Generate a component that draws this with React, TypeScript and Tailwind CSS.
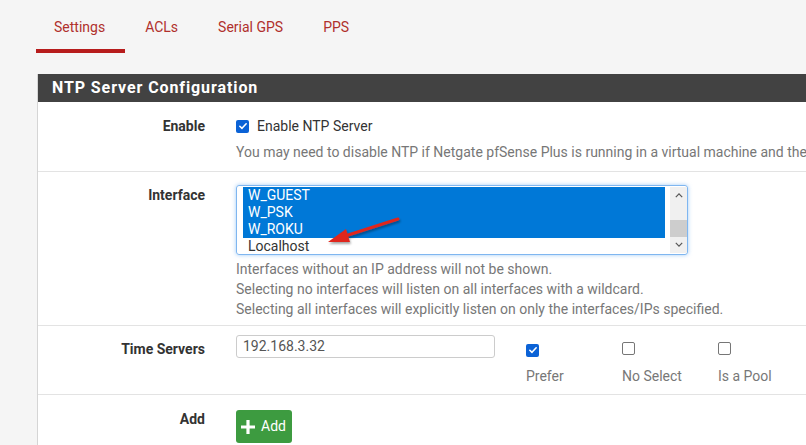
import React from "react";

const Check: React.FC<{ checked?: boolean }> = ({ checked }) =>
    checked ? (
        <span className="inline-flex h-[13px] w-[13px] items-center justify-center rounded-[2px] bg-[#0b62d6]">
            <svg viewBox="0 0 12 12" className="h-[10px] w-[10px]">
                <path d="M2.2 6.3 L4.8 8.8 L9.8 3.4" fill="none" stroke="#fff" strokeWidth="1.9" strokeLinecap="round" strokeLinejoin="round" />
            </svg>
        </span>
    ) : (
        <span className="inline-block h-[13px] w-[13px] rounded-[2px] border-[1.5px] border-[#767676] bg-white" />
    );

const Row: React.FC<{ label: string; cls: string; labelCls?: string; children: React.ReactNode }> = ({ label, cls, labelCls = "", children }) => (
    <div className={`flex border-b border-[#e3e3e3] ${cls}`}>
        <div className={`w-[167px] shrink-0 text-right text-[14px] font-bold text-[#333] ${labelCls}`}>{label}</div>
        <div className="ml-[31px] min-w-0 flex-1">{children}</div>
    </div>
);

const items = [
    { name: "W_GUEST", sel: true },
    { name: "W_PSK", sel: true },
    { name: "W_ROKU", sel: true },
    { name: "Localhost", sel: false },
];

const App: React.FC = () => {
    return (
        <div className="relative h-[445px] w-[806px] overflow-hidden bg-[#f5f5f5] font-['Roboto',sans-serif]">
            {/* tabs */}
            <div className="flex pl-[36px] text-[14px] text-[#b0302c]">
                <div className="border-b-4 border-[#b71c1c] pb-[12px] pl-[18px] pr-[20px] pt-[17px] leading-[20px]">Settings</div>
                <div className="px-[20px] pb-[12px] pt-[17px] leading-[20px]">ACLs</div>
                <div className="px-[20px] pb-[12px] pt-[17px] leading-[20px]">Serial GPS</div>
                <div className="px-[20px] pb-[12px] pt-[17px] leading-[20px]">PPS</div>
            </div>

            {/* panel */}
            <div className="ml-[37px] mt-[21px] w-[900px] border-l border-[#d5d5d5] bg-white">
                <div className="h-[28px] bg-[#424242] pl-[14px] text-[16px] font-bold leading-[28px] tracking-[0.9px] text-white">
                    NTP Server Configuration
                </div>

                <Row label="Enable" cls="h-[70px] pt-[14px]" labelCls="leading-[20px]">
                    <div className="flex items-center gap-[8px] text-[14px] leading-[20px] text-[#333]">
                        <Check checked />
                        <span>Enable NTP Server</span>
                    </div>
                    <div className="mt-[6px] whitespace-nowrap text-[14px] leading-[20px] text-[#777]">
                        You may need to disable NTP if Netgate pfSense Plus is running in a virtual machine and the host is responsible for the clock.
                    </div>
                </Row>

                <Row label="Interface" cls="h-[154px] pt-[13px]" labelCls="leading-[20px]">
                    <div className="flex h-[70px] w-[452px] rounded-[3px] border border-[#7fb6f0] py-[1px] pl-[6px] shadow-[0_0_4px_rgba(100,170,240,0.6)]">
                        <div className="flex-1">
                            {items.map((it) => (
                                <div
                                    key={it.name}
                                    className={`h-[17px] pl-[5px] text-[14px] leading-[17px] ${it.sel ? "bg-[#0078d7] text-white" : "text-[#333]"}`}
                                >
                                    {it.name}
                                </div>
                            ))}
                        </div>
                        <div className="ml-[5px] flex w-[17px] flex-col bg-[#f0f0f0]">
                            <div className="flex h-[17px] items-center justify-center">
                                <svg viewBox="0 0 10 6" className="h-[5px] w-[8px]">
                                    <path d="M1 5 L5 1 L9 5" fill="none" stroke="#555" strokeWidth="1.5" />
                                </svg>
                            </div>
                            <div className="h-[17px]" />
                            <div className="h-[17px] bg-[#cdcdcd]" />
                            <div className="flex h-[17px] items-center justify-center">
                                <svg viewBox="0 0 10 6" className="h-[5px] w-[8px]">
                                    <path d="M1 1 L5 5 L9 1" fill="none" stroke="#555" strokeWidth="1.5" />
                                </svg>
                            </div>
                        </div>
                    </div>
                    <div className="mt-[4px] text-[14px] leading-[20px] text-[#777]">
                        <div>Interfaces without an IP address will not be shown.</div>
                        <div>Selecting no interfaces will listen on all interfaces with a wildcard.</div>
                        <div>Selecting all interfaces will explicitly listen on only the interfaces/IPs specified.</div>
                    </div>
                </Row>

                <Row label="Time Servers" cls="h-[69px] pt-[13px]" labelCls="leading-[20px]">
                    <div className="flex">
                        <div className="-mt-[4px] h-[23px] w-[259px] rounded-[3px] border border-[#cccccc] pl-[6px] text-[14px] leading-[20px] text-[#555]">
                            192.168.3.32
                        </div>
                        <div className="ml-[31px] flex">
                            {[
                                { l: "Prefer", c: true },
                                { l: "No Select", c: false },
                                { l: "Is a Pool", c: false },
                            ].map((b) => (
                                <div key={b.l} className="w-[96px] text-[14px] text-[#777]">
                                    <div className="h-[20px] pt-[1px]">
                                        <Check checked={b.c} />
                                    </div>
                                    <div className="mt-[7px] leading-[20px]">{b.l}</div>
                                </div>
                            ))}
                        </div>
                    </div>
                </Row>

                <div className="flex h-[60px] pt-[14px]">
                    <div className="w-[167px] shrink-0 text-right text-[14px] font-bold leading-[20px] text-[#333]">Add</div>
                    <div className="ml-[31px] pt-[1px]">
                        <div className="flex h-[33px] w-[56px] items-center gap-[5px] rounded-[3px] bg-[#3d9b40] pl-[4px] text-[14px] text-white">
                            <svg viewBox="0 0 16 16" className="h-[16px] w-[16px]">
                                <path d="M8 1 V15 M1 8 H15" stroke="#fff" strokeWidth="3.2" />
                            </svg>
                            <span>Add</span>
                        </div>
                    </div>
                </div>
            </div>

            {/* annotation arrow */}
            <svg className="pointer-events-none absolute left-0 top-0" width="806" height="445">
                <defs>
                    <filter id="sh" x="-20%" y="-20%" width="140%" height="140%">
                        <feDropShadow dx="1" dy="2" stdDeviation="1.2" floodColor="#000" floodOpacity="0.35" />
                    </filter>
                </defs>
                <g filter="url(#sh)">
                    <path d="M398 219 L342 237" stroke="#e0261f" strokeWidth="3" strokeLinecap="round" />
                    <path d="M328 242 L346 229 L350 242 Z" fill="#e0261f" />
                </g>
            </svg>
        </div>
    );
};

export default App;
